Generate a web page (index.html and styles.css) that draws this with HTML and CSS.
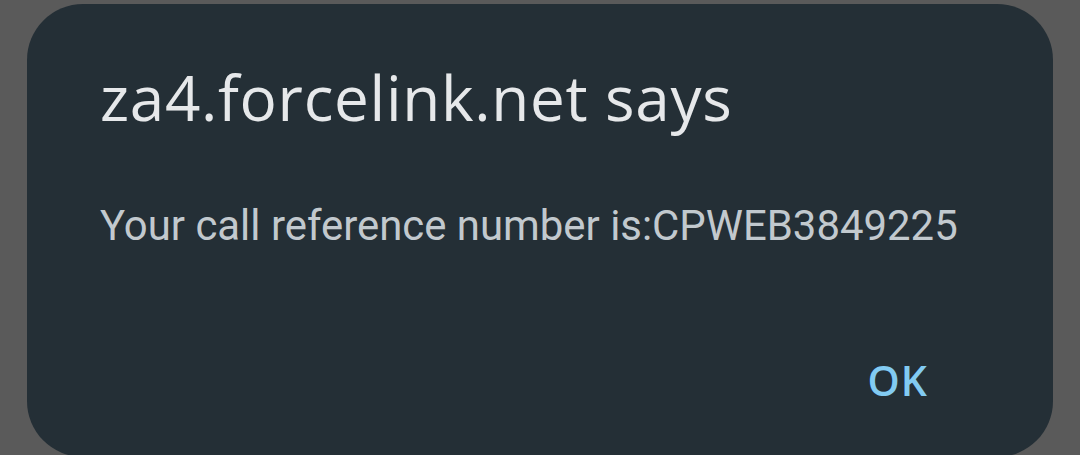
FILE: index.html
```html
<!DOCTYPE html>
<html>
<head>
<meta charset="utf-8">
<link rel="stylesheet" href="styles.css">
</head>
<body>
<div class="dialog">
  <h1 class="title">za4.forcelink.net says</h1>
  <p class="message">Your call reference number is:CPWEB3849225</p>
  <div class="actions">
    <button class="btn">OK</button>
  </div>
</div>
</body>
</html>
```

FILE: styles.css
```css
html, body {
  margin: 0;
  padding: 0;
  height: 100%;
  overflow: hidden;
}
body {
  background: #5a5a5a;
  padding: 4px 27px 0;
  box-sizing: border-box;
}
.dialog {
  height: 453px;
  background: #242f36;
  border-radius: 56px;
  padding: 0 73px;
  box-sizing: border-box;
  display: flex;
  flex-direction: column;
}
.title {
  margin: 57px 0 0;
  font-family: "Open Sans", sans-serif;
  font-weight: 400;
  font-size: 62px;
  line-height: 72px;
  color: #e6e8ea;
  letter-spacing: 0.7px;
}
.message {
  margin: 67px 0 0;
  font-family: Roboto, "Liberation Sans", sans-serif;
  font-size: 41.9px;
  line-height: 52px;
  color: #c2c9ce;
}
.actions {
  display: flex;
  justify-content: flex-end;
  margin-top: auto;
  padding: 0 52px 52px 0;
}
.btn {
  background: none;
  border: none;
  padding: 0;
  font-family: "Open Sans", sans-serif;
  font-weight: 600;
  font-size: 41px;
  line-height: 50px;
  letter-spacing: 1px;
  color: #82cbf2;
}
```
